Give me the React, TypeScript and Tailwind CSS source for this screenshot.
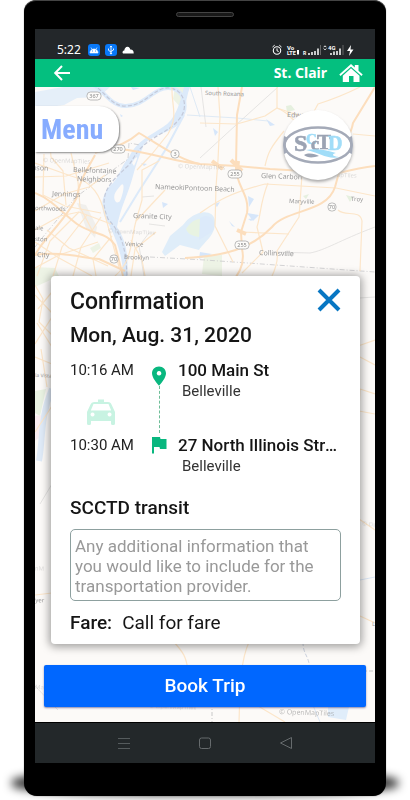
import React from "react";

const majorRoads = [
  "M85 62 C120 66 135 74 165 77 L202 79 L235 82 L304 86 C320 82 331 80 340 79",
  "M165 77 C145 73 128 60 104 46 C88 60 75 60 60 66",
  "M207 0 L202 28 L201 79 C200 98 215 107 212 126 L206 145 L207 162 C210 175 206 186 195 197",
  "M150 171 C190 169 216 162 237 140 C252 122 292 126 300 100 L305 82 C302 60 315 55 318 36 L340 0",
  "M0 106 C18 113 28 127 42 137 C58 148 72 145 80 158 L88 189",
  "M60 68 C52 83 44 94 42 110 C32 130 15 146 5 160 L0 168",
  "M0 168 C25 164 48 171 64 172 L90 184",
];

const minorRoads = [
  "M0 76 L36 89 C58 94 66 110 70 128 L84 180",
  "M14 45 L16 70 L28 84 L31 118",
  "M36 66 L43 95 L45 120 L59 147",
  "M0 90 L31 89 L74 76",
  "M0 124 L29 107 L54 100 L70 88",
  "M9 67 L8 108 L30 119 L66 126",
  "M0 143 L25 129 L44 125 L76 137",
  "M2 189 L15 154 L44 125",
  "M18 189 L27 160 L52 128",
  "M38 189 L46 160 L66 130",
  "M0 155 L24 171 L57 189",
  "M12 143 L34 161 L73 179",
  "M0 181 L24 168 L63 155",
  "M61 189 L58 172 L77 149",
  "M80 189 C98 174 96 151 101 134 L130 103",
  "M96 189 L100 162 L121 145",
  "M101 134 L107 113 L107 83 L124 74",
  "M110 189 L107 173 L96 153",
  "M137 0 C136 18 144 28 133 47 L117 67 L102 83",
  "M183 0 L185 30 L183 73 L181 100 L180 139 L198 175",
  "M165 36 L202 37 L230 29 L242 21 C260 28 254 37 281 45",
  "M242 0 L242 21 L275 32 L283 17 C302 11 311 7 325 0",
  "M249 44 C236 60 233 65 230 79",
  "M165 126 C180 116 191 107 230 97 L301 101 L340 109",
  "M233 96 C225 116 226 127 222 140 L228 165 L207 186",
  "M267 88 L264 130 L242 164 C244 174 238 187 237 189",
  "M206 145 L254 147",
  "M303 123 C310 130 325 122 327 134 L325 184",
  "M318 47 L340 49",
  "M0 198 L8 212 L4 235 L17 248",
  "M2 236 L17 260",
  "M0 257 L17 230",
  "M0 208 L17 226 M3 222 L17 205 M0 270 L17 277 M6 262 L12 300",
  "M340 253 L323 259",
  "M325 270 L340 278",
  "M340 307 L325 302 L324 324 L340 327",
  "M0 345 L17 319",
  "M324 432 L340 443",
  "M325 529 L340 536",
  "M0 508 L17 506",
  "M138 554 C149 566 151 570 153 583",
  "M214 555 C204 577 205 611 204 635",
  "M218 616 L250 635",
];

function Label({ x, y, size = 7, children }: { x: number; y: number; size?: number; children: string }) {
  return (
    <text x={x} y={y} fontSize={size} fill="#989898" fontFamily="'Noto Sans', sans-serif" transform={`rotate(2 ${x} ${y})`}>
      {children}
    </text>
  );
}

function Shield({ x, y, text, wide = false }: { x: number; y: number; text: string; wide?: boolean }) {
  const w = wide ? 7 : 4;
  return (
    <g>
      <rect x={x - w} y={y - 4} width={w * 2} height="8" rx="3.5" fill="#fdfcfa" stroke="#aaa" strokeWidth=".8" />
      <text x={x} y={y + 2} fontSize="5.5" fill="#888" textAnchor="middle" fontFamily="'Noto Sans', sans-serif">
        {text}
      </text>
    </g>
  );
}

function RegionMap() {
  return (
    <svg className="absolute inset-0 size-full" viewBox="0 0 340 635" preserveAspectRatio="xMidYMin slice" aria-hidden="true">
      <rect width="340" height="635" fill="#fcfaf8" />
      <path d="M0 5 L28 0 L75 0 L64 10 L42 11 L29 18 L0 22Z" fill="#e5eff9" />
      <path d="M140 0 L152 0 L147 22 L138 12Z" fill="#edf3e5" />
      <path d="M42 116 L51 118 L62 140 L60 151 L51 141Z" fill="#f0efec" />
      <path d="M55 161 L64 156 L66 161 L58 166Z" fill="#edf3e5" />
      <path d="M0 180 L20 181 L24 189 L0 200Z" fill="#edf3e5" />
      <path d="M169 169 L187 168 L187 189 L167 187Z" fill="#edf3e5" />
      <path d="M251 19 L256 18 L260 23 L252 25Z M268 109 L274 107 L271 112Z M311 108 L318 110 L315 115Z" fill="#e6f0df" />
      <path d="M0 304 L11 302 L5 329 L0 326Z" fill="#e9f2e2" />
      <path d="M0 329 L6 328 L5 350 L0 354Z" fill="#faedf1" />
      <path d="M4 374 C8 353 5 330 17 302" fill="none" stroke="#dfeaf7" strokeWidth="6" />
      <path d="M58 -2 C68 2 76 20 91 19 C110 19 119 0 134 1 C149 2 154 20 145 31" fill="none" stroke="#dceafa" strokeWidth="4" />
      <path
        d="M149 0 L155 0 C149 16 151 29 144 37 C135 46 118 47 109 57 C106 65 101 77 98 89 C93 108 85 121 82 140 C91 153 94 170 92 189 L88 189 C88 168 80 149 72 134 C63 119 68 104 78 96 C84 90 87 77 94 70 C101 55 114 49 128 40 C141 32 145 16 149 0Z"
        fill="#dceafa"
      />
      <path d="M86 98 C90 94 89 105 85 114 C81 119 76 110 82 103Z M97 76 C101 69 105 67 99 79Z" fill="#fcfaf8" />
      <path d="M149 28 L131 62 L104 104 L85 135" fill="none" stroke="#dceafa" strokeWidth="2" />
      <path d="M127 165 L135 149 L148 138 C158 124 178 120 180 134 C181 148 170 154 164 163 L145 158 L130 169Z" fill="#dfedf9" />
      <path d="M151 142 C158 131 169 128 174 139 L164 150 C157 149 153 147 151 142Z" fill="#e8f3e2" />
      <path d="M165 131 C176 124 183 136 177 145 L164 153Z" fill="#dceafa" />
      <path
        d="M213 109 L219 112 L214 120Z M212 126 L224 128 L218 134Z M213 132 L220 131 L216 134Z M231 32 L240 38 L235 39Z M178 41 L183 45 L180 49Z M194 134 L200 140 L197 139Z M127 115 L133 117 L128 121Z M106 76 L112 77 L109 79Z M165 165 L177 167 L164 172Z M179 117 L185 115 L182 120Z M85 27 L88 29 L86 30Z M96 0 L105 1 L98 3Z"
        fill="#d6e6fa"
      />
      <path d="M152 28 L202 31 L233 34 M155 0 L165 30" fill="none" stroke="#dfeaf5" strokeWidth="1" />
      <g fill="none" stroke="#dfdedd" strokeWidth=".8">
        <path d="M165 71 L201 38 L243 0 M166 0 L171 40 M114 146 L104 159 L109 189 M119 109 L107 110 M114 137 L130 139 M238 165 L275 166 C291 163 303 154 340 140 M5 417 L17 397 M340 210 L324 211 M0 599 L23 623" />
      </g>
      <path
        d="M58 -2 C68 2 76 20 91 19 C110 19 119 0 134 1 C149 2 154 20 145 31 C135 46 112 50 101 67 L94 78 C73 97 63 108 73 132 C89 149 91 166 92 189"
        fill="none" stroke="#c4cada" strokeWidth="1.2" strokeDasharray="4 2"
      />
      <path d="M0 160 C14 142 24 131 41 110 L93 72 L94 56 L105 58 M115 170 L170 173 L340 185" fill="none" stroke="#c9c9cc" strokeWidth=".8" strokeDasharray="5 2 1 2" />
      <g fill="none" stroke="#fce6ca" strokeWidth="1.2" strokeLinejoin="round">
        {minorRoads.map((d) => <path key={d} d={d} />)}
      </g>
      <g fill="none" stroke="#fcdebd" strokeWidth="2" strokeLinejoin="round">
        {majorRoads.map((d) => <path key={d} d={d} />)}
      </g>
      <path d="M177 74 L188 82 M196 73 L207 84 M203 74 L202 83 M300 86 L308 80 M202 143 L211 147" stroke="#fcdebd" strokeWidth="4" />
      <path d="M268 555 C268 568 274 568 275 583" fill="none" stroke="#ccd2df" strokeWidth="1" strokeDasharray="4 2" />
      <path d="M177 616 L177 635 M325 584 L340 584" fill="none" stroke="#c8c8c8" strokeWidth="1" strokeDasharray="4 2 1 2" />
      <path d="M325 493 L340 490 M277 616 L285 635" fill="none" stroke="#dbe7f5" strokeWidth="1" />
      <path d="M293 620 L314 620 L311 633 L293 630Z" fill="#e0edfa" />
      <g opacity=".32">
        <Label x={8} y={75} size={6}>© OpenMapTiles</Label>
        <Label x={143} y={81} size={6}>© OpenMapTiles</Label>
        <Label x={73} y={146} size={6}>© OpenMapTiles</Label>
        <Label x={302} y={90} size={6}>apTiles</Label>
        <Label x={327} y={439} size={6}>© Op</Label>
        <Label x={-12} y={483} size={6}>OpenM</Label>
        <Label x={0} y={602} size={6}>Ma</Label>
        <Label x={114} y={621} size={6}>© OpenMapTiles</Label>
      </g>
      <g opacity=".65"><Label x={244} y={627} size={7}>© OpenMapTiles</Label></g>
      <Label x={170} y={8} size={6}>South Roxana</Label>
      <Label x={252} y={30}>Edwardsville</Label>
      <Label x={226} y={91}>Glen Carbon</Label>
      <Label x={254} y={116} size={6}>Maryville</Label>
      <Label x={316} y={114} size={6}>Troy</Label>
      <Label x={224} y={168}>Collinsville</Label>
      <Label x={120} y={102} size={7}>NameokiPontoon Beach</Label>
      <Label x={98} y={131}>Granite City</Label>
      <Label x={90} y={159} size={6}>Venice</Label>
      <Label x={89} y={172} size={6}>Brooklyn</Label>
      <Label x={38} y={85}>Bellefontaine</Label>
      <Label x={42} y={94}>Neighbors</Label>
      <Label x={17} y={109}>Jennings</Label>
      <Label x={-3} y={83}>uson</Label>
      <Label x={0} y={123} size={6}>orthwoods</Label>
      <Label x={0} y={143} size={6}>ale</Label>
      <Label x={0} y={154} size={6}>ston</Label>
      <Label x={2} y={170}>City</Label>
      <Label x={0} y={290} size={5}>la Vista</Label>
      <Label x={-3} y={515} size={6}>eyer</Label>
      <Label x={337} y={539} size={6}>L</Label>
      <Shield x={59} y={9} text="367" wide />
      <Shield x={140} y={67} text="3" />
      <Shield x={200} y={87} text="255" wide />
      <Shield x={207} y={158} text="255" wide />
      <Shield x={297} y={120} text="70" />
      <Shield x={79} y={172} text="70" />
      <Shield x={83} y={62} text="270" wide />
    </svg>
  );
}

function StatusBar() {
  return (
    <div className="flex h-[30px] items-end justify-between bg-[#23272a] pr-[21px] pb-[2px] pl-[22px] text-white">
      <div className="flex items-center gap-[5px]">
        <time className="mr-[2px] font-['Noto_Sans',sans-serif] text-[12px] leading-[14px]">5:22</time>
        <span className="flex size-[12px] items-center justify-center rounded-[3px] bg-[#0878f8]">
          <svg className="size-[10px]" viewBox="0 0 10 10">
            <path d="M1 8 C1 5.5 3 4 5 4 S9 5.5 9 8Z M2 2.5 L3 4.5 M8 2.5 L7 4.5" fill="white" stroke="white" strokeWidth=".6" />
            <path d="M3 6h.8 M6.2 6h.8" stroke="#0878f8" />
          </svg>
        </span>
        <span className="flex size-[12px] items-center justify-center rounded-[3px] bg-[#0878f8]">
          <svg className="size-[10px]" viewBox="0 0 10 10" fill="none" stroke="white" strokeWidth=".9">
            <path d="M5 1V9 M4 2.2 5 1 6 2.2 M2.5 3.5V5.3L5 7 M7.5 3.5V5L5 6.5" />
            <circle cx="5" cy="8.5" r=".6" fill="white" />
          </svg>
        </span>
        <svg className="h-[12px] w-[12px]" viewBox="0 0 12 12" fill="white">
          <path d="M1 9.5 C0 8.5 .5 6.5 2.3 6.5 C2.5 4.5 3.7 2.7 5.4 2.7 C7.4 2.7 8 4.2 8.2 5.5 C10 5.1 12 6.5 11.7 9.5Z" />
        </svg>
      </div>
      <svg className="h-[14px] w-[82px]" viewBox="0 0 82 14" fill="none" stroke="white">
        <circle cx="5" cy="7.5" r="3.7" strokeWidth="1.1" />
        <path d="M5 5.4V7.8L6.7 8.5 M.5 4 2.7 2.2 M9.5 4 7.3 2.2" />
        <g fill="white" stroke="none" fontFamily="Roboto, sans-serif" fontWeight="700">
          <text x="15" y="7" fontSize="6">Vo</text>
          <text x="15" y="12" fontSize="5.5">LTE</text>
          <text x="31" y="12" fontSize="5">R</text>
          <text x="56" y="7" fontSize="6">4G</text>
        </g>
        <path d="M25 7h2v4.5h-2z" fill="white" stroke="none" />
        <path d="M37 12V10 M40 12V9 M43 12V8 M46 12V5.5 M59 12V10 M62 12V8.5 M65 12V8 M68 12V5.5" strokeWidth="1.5" />
        <path d="M48.5 12V2 M71 12V2" stroke="#777" strokeWidth=".8" />
        <path d="M51.7 4.2 53 2.8 54.3 4.2 M51.7 5.5 53 6.9 54.3 5.5" strokeWidth=".9" />
        <path d="M79 2 75 8h3l-1 5 4.5-6.5h-3Z" fill="white" stroke="none" />
      </svg>
    </div>
  );
}

function Header() {
  return (
    <header className="relative flex h-[28px] items-center justify-between bg-[#04bf7f] pr-[12px] pl-[18px] text-white shadow-sm">
      <button type="button" aria-label="Back">
        <svg className="size-[18px]" viewBox="0 0 18 18" fill="none" stroke="white" strokeWidth="2">
          <path d="M17 9H2.5 M9 2 2.2 9 9 16" />
        </svg>
      </button>
      <div className="flex items-center gap-[12px]">
        <h1 className="font-['Noto_Sans',sans-serif] text-[14px] leading-[20px] font-bold">St. Clair</h1>
        <button type="button" aria-label="Home">
          <svg className="h-[20px] w-[24px]" viewBox="0 0 24 20" fill="white">
            <path d="M12 1 15.8 4.5V2H19.5V7.8L23.7 11.6 22.5 13 12 3.8 1.5 13 .3 11.6Z" />
            <path d="M12 5.3 20.5 12.7V19H14.5V13H10V19H3.8V12.7Z" />
          </svg>
        </button>
      </div>
    </header>
  );
}

function AgencyLogo() {
  return (
    <svg className="size-full" viewBox="0 0 70 70" role="img" aria-label="SCCTD">
      <ellipse cx="35" cy="35" rx="33.5" ry="17.5" fill="white" stroke="#a4aab8" strokeWidth="2.5" />
      <path d="M3 27 C-1 33 -1 37 3 43 M67 27 C71 33 71 37 67 43" stroke="#a4aab8" strokeWidth="5" fill="none" />
      <g fontFamily="'Liberation Serif', serif" fontWeight="700" strokeWidth=".6">
        <text x="23" y="34" fontSize="15" fill="#a1ddf8" stroke="#a1ddf8">C</text>
        <text x="11" y="41" fontSize="24" fill="#9ba3b3" stroke="#9ba3b3">S</text>
        <text x="28" y="40" fontSize="18" fill="#9ba3b3" stroke="#9ba3b3">c</text>
        <text x="34" y="39" fontSize="21" fill="#9ba3b3" stroke="#9ba3b3">T</text>
        <text x="45" y="40" fontSize="20" fill="#a1ddf8" stroke="#a1ddf8">D</text>
      </g>
      <path d="M23 40 C33 38 43 40 53 43 C46 45 53 47 57 47 C44 50 38 43 23 40Z" fill="#a1ddf8" />
      <path d="M21 45 C26 42 32 44 36 46 C30 48 24 48 21 45Z" fill="#9ba3b3" />
    </svg>
  );
}

function Stop({ street, city }: { street: string; city: string }) {
  return (
    <div className="min-w-0 pl-[10px]">
      <p className="truncate text-[17px] leading-[20px] font-medium">{street}</p>
      <p className="pl-1 text-[15px] leading-[22px] text-[#333]">{city}</p>
    </div>
  );
}

function Itinerary() {
  return (
    <div className="mt-[11px] grid grid-cols-[80px_18px_minmax(0,1fr)] grid-rows-[75px_42px]">
      <div className="row-span-2 flex flex-col">
        <time className="text-[15px] leading-[20px] whitespace-nowrap text-[#222]">10:16 AM</time>
        <svg className="mt-[18px] mb-[9px] ml-[16px] h-[28px] w-[30px]" viewBox="0 0 30 28" fill="#c8f3e2">
          <path
            fillRule="evenodd"
            d="M12 4V1.5H18V4H22C24 4 25 5 25.5 6.5L29 14V25.5Q29 27 27.5 27H26.5Q25 27 25 25.5V23H5V25.5Q5 27 3.5 27H2.5Q1 27 1 25.5V14L4.5 6.5Q5.3 4 8 4Z M7.5 6 4.8 12.5H25.2L22.5 6Z M6.5 14.5a2 2 0 1 0 .1 0Z M23.5 14.5a2 2 0 1 0 .1 0Z"
          />
        </svg>
        <time className="text-[15px] leading-[20px] whitespace-nowrap text-[#222]">10:30 AM</time>
      </div>
      <div className="row-span-2 flex flex-col items-center pt-[6px] pb-[23px]">
        <svg className="h-[20px] w-[16px]" viewBox="0 0 16 20" fill="#09b77f">
          <path fillRule="evenodd" d="M8 .5C3.8.5 1 3.5 1 7.3C1 12 6 17.4 8 19.7C10 17.4 15 12 15 7.3C15 3.5 12.2.5 8 .5Z M8 5a2.3 2.3 0 1 0 .1 0Z" />
        </svg>
        <div className="flex-1 border-l border-dashed border-[#6dbd97]" />
        <svg className="mt-[3px] h-[18px] w-[16px]" viewBox="0 0 16 18" fill="#09b77f">
          <path d="M1 1H9L9.5 3H15.5V13H9L8.5 11H3V17.5H1Z" />
        </svg>
      </div>
      <Stop street="100 Main St" city="Belleville" />
      <Stop street="27 North Illinois Street" city="Belleville" />
    </div>
  );
}

function Confirmation() {
  return (
    <section className="relative mr-[15px] ml-[16px] rounded-[4px] bg-white px-[19px] pt-[12px] pb-[11px] text-[#151515] shadow-[0_1px_8px_2px_rgba(0,0,0,0.36)]">
      <div className="flex items-start justify-between">
        <h2 className="text-[23px] leading-[28px] font-medium">Confirmation</h2>
        <button type="button" aria-label="Close">
          <svg className="size-[24px]" viewBox="0 0 24 24" stroke="#0877c3" strokeWidth="4">
            <path d="M2 2 22 22 M22 2 2 22" />
          </svg>
        </button>
      </div>
      <p className="mt-[5px] text-[21px] leading-[28px] font-medium">Mon, Aug. 31, 2020</p>
      <Itinerary />
      <h3 className="mt-[21px] text-[19px] leading-[20px] font-medium">SCCTD transit</h3>
      <textarea
        aria-label="Additional information"
        placeholder="Any additional information that you would like to include for the transportation provider."
        className="mt-[11px] block h-[72px] w-full resize-none overflow-hidden rounded-[5px] border border-[#8da09f] bg-white px-[4px] pt-[6px] text-[17px] leading-[20px] placeholder:text-[#999]"
      />
      <p className="mt-[12px] text-[19px] leading-[20px]">
        <strong className="mr-[10px] font-medium">Fare:</strong>Call for fare
      </p>
    </section>
  );
}

function SystemNavigation() {
  const style = "flex size-[24px] items-center justify-center";
  return (
    <nav aria-label="System" className="flex h-[41px] items-center justify-center gap-[57px] border-t border-black bg-[#23282a]">
      <button type="button" aria-label="Recent apps" className={style}>
        <svg className="size-[14px]" viewBox="0 0 14 14" stroke="#555b5d"><path d="M1 2.5H13 M1 7.5H13 M1 12.5H13" /></svg>
      </button>
      <button type="button" aria-label="Home screen" className={style}>
        <svg className="size-[14px]" viewBox="0 0 14 14" fill="none" stroke="#666b6d"><rect x="1.5" y="2" width="11" height="10.5" rx="2" /></svg>
      </button>
      <button type="button" aria-label="Go back" className={style}>
        <svg className="size-[14px]" viewBox="0 0 14 14" fill="none" stroke="#666b6d"><path d="M12.5 1.5V12.5L1.5 7Z" strokeLinejoin="round" /></svg>
      </button>
    </nav>
  );
}

export default function App() {
  return (
    <div className="min-h-screen overflow-hidden bg-white px-[24px] font-[Roboto,sans-serif]">
      <div className="relative">
        <div className="absolute -right-[12px] bottom-[1px] -left-[12px] h-[24px] rounded-[40%] bg-black/80 blur-[5px]" />
        <div className="relative rounded-t-[12px] rounded-b-[13px] border-t border-[#444] bg-black px-[11px] pb-[33px] shadow-[0_0_1px_#555]">
          <div className="flex h-[28px] justify-center pt-[11px]">
            <div className="h-[5px] w-[58px] rounded-full border border-[#444] bg-[#181818]" />
          </div>
          <StatusBar />
          <Header />
          <main className="relative overflow-hidden pb-[15px]">
            <RegionMap />
            <div className="relative flex h-[189px] items-start justify-between pt-[19px] pr-[22px]">
              <button type="button" className="h-[46px] w-[84px] rounded-r-[20px] bg-white pl-[6px] text-left font-['Liberation_Sans_Narrow','Roboto_Condensed',Roboto,sans-serif] text-[28px] leading-[48px] font-bold text-[#87acff] shadow-[1px_1px_2px_#888]">
                Menu
              </button>
              <button type="button" aria-label="SCCTD home" className="mt-[4px] size-[70px] overflow-hidden rounded-full bg-white shadow-[0_2px_3px_#aaa]">
                <AgencyLogo />
              </button>
            </div>
            <Confirmation />
            <div className="relative mt-[21px] px-[9px]">
              <button type="button" className="block h-[42px] w-full rounded-[2px] bg-[#0067ff] text-[19px] leading-[42px] font-medium text-white shadow-[0_1px_2px_rgba(60,60,120,0.6)]">
                Book Trip
              </button>
            </div>
          </main>
          <SystemNavigation />
        </div>
      </div>
    </div>
  );
}
